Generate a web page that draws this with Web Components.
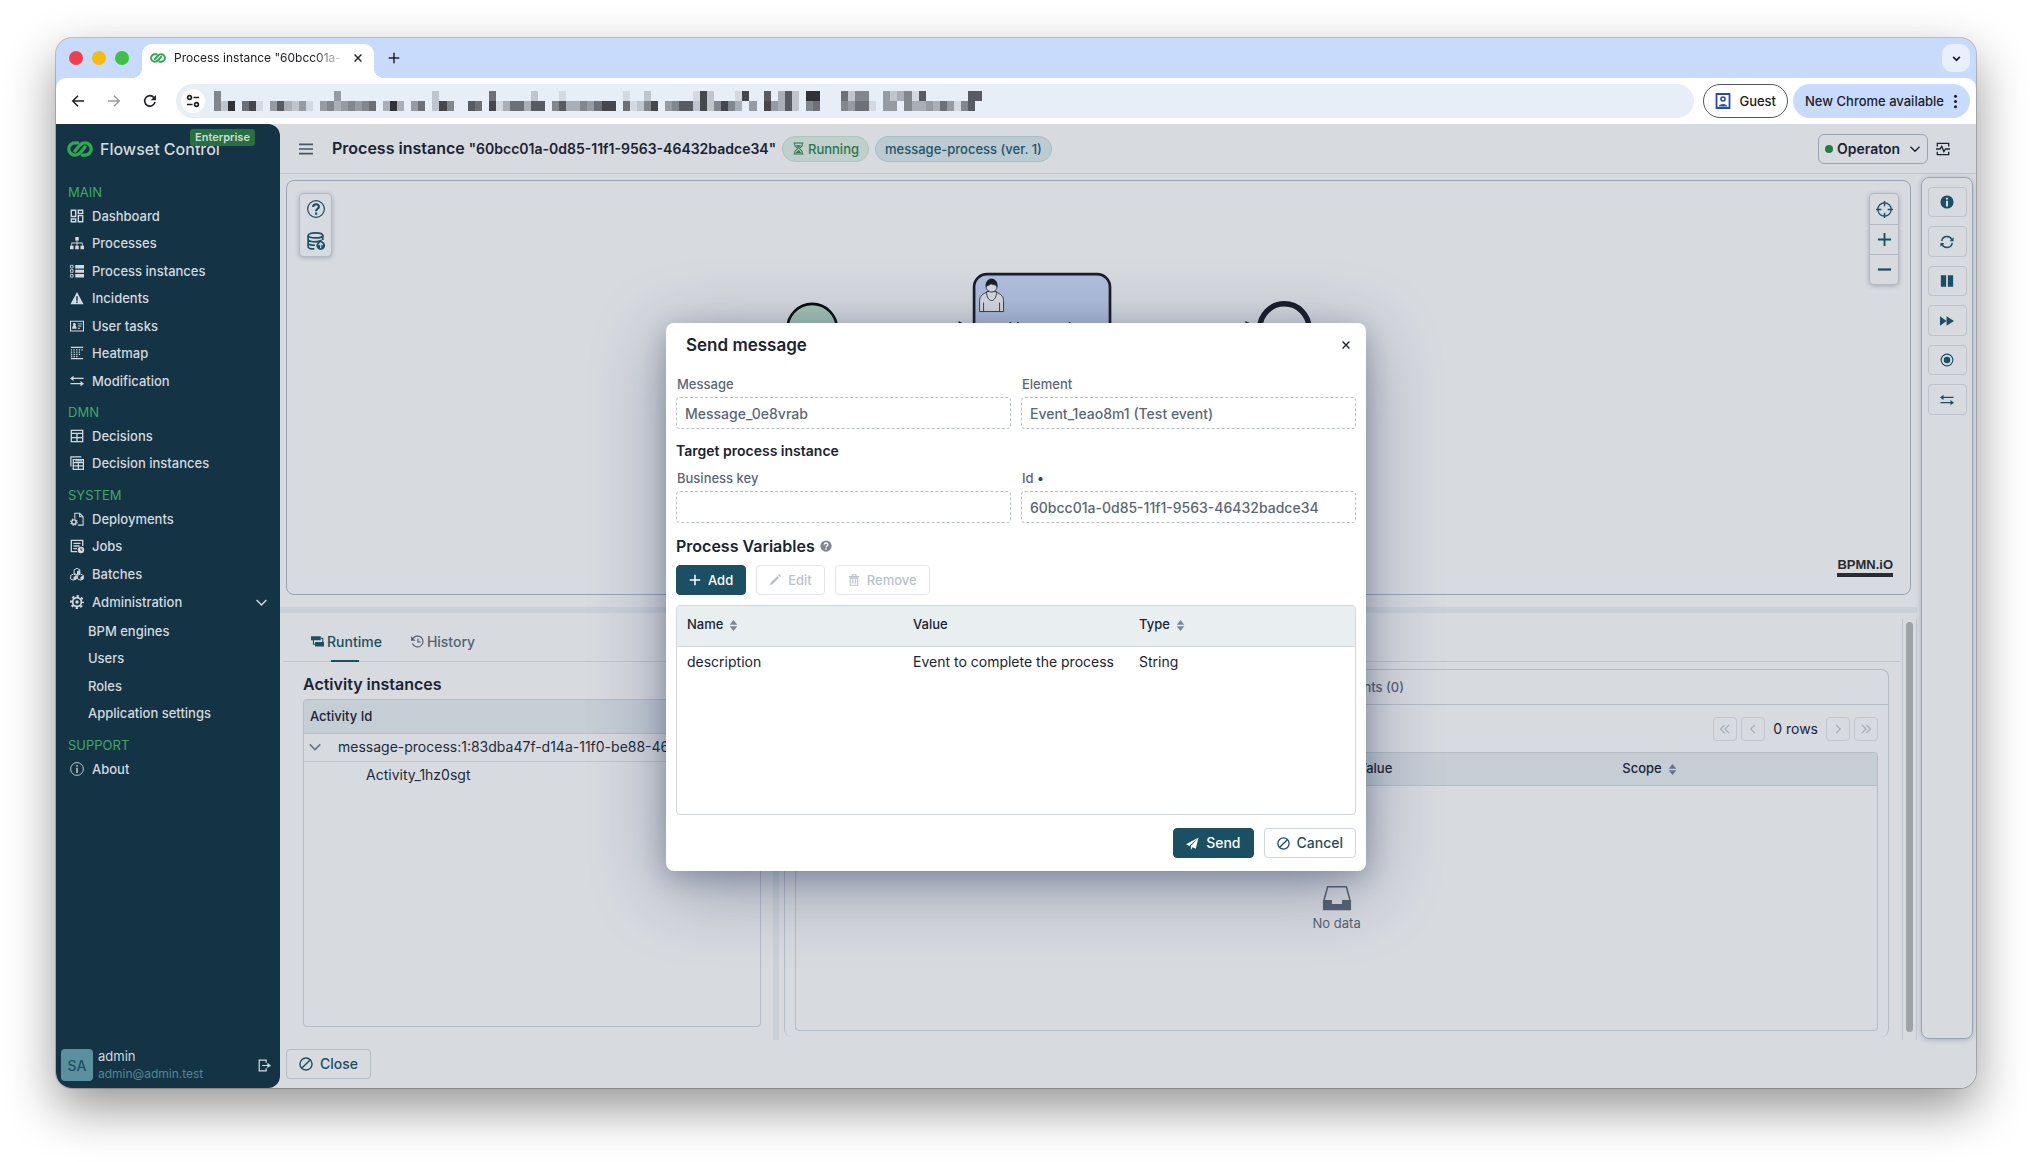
<!DOCTYPE html>
<html lang="en">
<head>
<meta charset="utf-8">
<title>Flowset Control</title>
<style>
	html, body {
		margin: 0;
		height: 100%;
	}
	body {
		box-sizing: border-box;
		padding: 38px 56px 74px;
		background: #fff;
		font: 14px/20px Inter, "Liberation Sans", sans-serif;
		color: #1f2b3d;
		overflow: hidden;
		--surface: #d7dadf;
		--line: #b4bcc6;
		--head: #c5cdd5;
		--primary: #1b4f63;
		--ink: #1a2434;
		--muted: #566273;
	}
</style>
</head>
<body>
<browser-window>
	<flowset-app></flowset-app>
</browser-window>
<script>
const ICONS = {
	logo: `<g fill="none" stroke="#2fa84f" stroke-width="2" stroke-linecap="round"><path d="M6.600 4.300H4.800a3.700 3.700 0 0 0 0 7.400c1.700 0 2.700-.6 3.600-1.700l2.700-3.200"/><path d="M9.400 11.700h1.800a3.700 3.700 0 0 0 0-7.400c-1.700 0-2.700.6-3.600 1.700L4.900 9.200"/></g>`,
	dashboard: `<g fill="none" stroke="currentColor" stroke-width="1.6"><path d="M1.500 1.500h5v7h-5zM9.500 1.500h5v3.500h-5zM9.500 7.500h5v7h-5zM1.500 11.500h5v3h-5z"/></g>`,
	sitemap: `<path fill="currentColor" d="M6 1h4v4H6zM0 11h4v4H0zM6 11h4v4H6zM12 11h4v4h-4zM7.500 5h1v6h-1zM1.500 7.500h13V11h-1V8.500h-11V11h-1z"/>`,
	list: `<path fill="currentColor" d="M6 1h10v4H6zM6 6.500h10v3.500H6zM6 11.500h10v4H6z"/><path fill="none" stroke="currentColor" d="M.5 1.500h3v3h-3zM.5 6.500h3v3h-3zM.5 12h3v3h-3z"/>`,
	warning: `<path fill="currentColor" fill-rule="evenodd" d="M8 1 .5 15h15zM7.200 6h1.600v5H7.200zM7.200 12h1.600v1.600H7.200z"/>`,
	card: `<path fill="none" stroke="currentColor" stroke-width="1.200" d="M.6 2.600h14.800v11H.6z"/><path fill="currentColor" d="M5 4.500a1.700 1.700 0 0 1 1 3.100c1 .4 1.500 1.400 1.500 3.400h-5c0-2 .5-3 1.500-3.400a1.700 1.700 0 0 1 1-3.100zM9 5h5v1H9zM9 7.500h4v1H9zM9 10h2.500v1H9z"/>`,
	heatmap: `<path stroke="currentColor" stroke-width="1.400" d="M1 1.500h14M1 14.500h14"/><path stroke="currentColor" stroke-width="1.500" stroke-dasharray="1.500 1.500" d="M1 4.500h14M1 7h12M1 9.500h12M1 12h9"/>`,
	modify: `<g fill="none" stroke="currentColor" stroke-width="1.500"><path d="M3 5h12.500M.5 11H13"/></g><path fill="currentColor" d="M4 2v6L0 5zM12 8v6l4-3z"/>`,
	table: `<path fill="none" stroke="currentColor" stroke-width="1.500" d="M1.500 1.500h13v13h-13zM1.500 5h13M1.500 9.800h13M8 5v9.500"/>`,
	tables: `<path fill="none" stroke="currentColor" stroke-width="1.400" d="M1 12V1h12M3.700 4h11.600v11.300H3.700zM3.700 7.500h11.600M3.700 11.300h11.600M9.500 7.500v8M6 5.500h8"/>`,
	deploy: `<path fill="none" stroke="currentColor" stroke-width="1.200" d="M5.500 7V1.500h5.500L15 5.500v9.500H9M11 1.500v4h4"/><circle cx="4.500" cy="11.500" r="2.500" fill="none" stroke="currentColor" stroke-width="1.600"/><circle cx="4.500" cy="11.500" r="3.700" fill="none" stroke="currentColor" stroke-width="1.200" stroke-dasharray="1.500 1.400"/>`,
	jobs: `<path fill="none" stroke="currentColor" stroke-width="1.500" d="M14.500 8V1.500h-13v13H8M4 5h8M4 8h7M4 11h4"/><circle cx="12.500" cy="12.500" r="3.700" fill="currentColor"/><path fill="none" stroke="#143445" d="M12.500 10.500v2.200h1.800"/>`,
	cubes: `<g fill="none" stroke="currentColor" stroke-width="1.100"><path d="M8 1.500 11.300 3.200v4L8 9 4.700 7.200v-4zM4 8l3.300 1.700v4L4 15 .7 13.700v-4zM12 8l3.300 1.700v4L12 15l-3.300-1.300v-4z"/></g><path fill="currentColor" d="m8 5 3.300-1.800v4L8 9zM4 11.500l3.300-1.800v4L4 15zM12 11.500l3.300-1.800v4L12 15z"/>`,
	cog: `<circle cx="8" cy="8" r="5" fill="none" stroke="currentColor" stroke-width="2"/><circle cx="8" cy="8" r="2" fill="currentColor"/><circle cx="8" cy="8" r="6.900" fill="none" stroke="currentColor" stroke-width="2.200" stroke-dasharray="2.600 2.820" stroke-dashoffset="1.300"/>`,
	infoLine: `<circle cx="8" cy="8" r="7.300" fill="none" stroke="currentColor"/><path stroke="currentColor" stroke-width="1.600" d="M8 3.500v1.700M8 6.500v6"/>`,
	info: `<path fill="currentColor" fill-rule="evenodd" d="M8 .5a7.500 7.500 0 1 0 0 15 7.500 7.500 0 0 0 0-15zM6.800 3h2.400v2.200H6.800zM6.800 6.500h2.400V13H6.800z"/>`,
	refresh: `<g fill="none" stroke="currentColor" stroke-width="1.700"><path d="M2 7a6 6 0 0 1 11.500-1.500M14 9a6 6 0 0 1-11.500 1.500"/></g><path fill="currentColor" d="M15.500 2.500v4.500H11zM.5 13.500V9H5z"/>`,
	pause: `<path fill="currentColor" d="M1 1.500h6v13H1zM9 1.500h6v13H9z"/>`,
	forward: `<path fill="currentColor" d="M0 2.500 7.500 8v-5.500L16 8l-8.500 5.500V8L0 13.500z"/>`,
	record: `<circle cx="8" cy="8" r="6.700" fill="none" stroke="currentColor" stroke-width="1.300"/><circle cx="8" cy="8" r="3.700" fill="currentColor"/>`,
	menu: `<path stroke="currentColor" stroke-width="1.700" d="M1 3.300h14M1 8h14M1 12.700h14"/>`,
	hourglass: `<path fill="none" stroke="currentColor" stroke-width="1.300" d="M2 1.200h12M2 14.800h12M3.500 1v3.500L7 8l-3.500 3.500V15M12.500 1v3.500L9 8l3.500 3.500V15"/><path fill="currentColor" d="M5 4h6L8 7.500zM8 9.500l3.500 4h-7z"/>`,
	chevron: `<path fill="none" stroke="currentColor" stroke-width="1.800" d="m2 5 6 6 6-6"/>`,
	chevronBold: `<path fill="none" stroke="currentColor" stroke-width="3" d="m2 5 6 6 6-6"/>`,
	left: `<path fill="none" stroke="currentColor" stroke-width="1.500" d="M10.500 2.500 5 8l5.500 5.500"/>`,
	right: `<path fill="none" stroke="currentColor" stroke-width="1.500" d="M5.500 2.500 11 8l-5.500 5.500"/>`,
	first: `<path fill="none" stroke="currentColor" stroke-width="1.500" d="M7.500 2.500 2 8l5.500 5.500M13.500 2.500 8 8l5.500 5.500"/>`,
	last: `<path fill="none" stroke="currentColor" stroke-width="1.500" d="M8.500 2.500 14 8l-5.500 5.500M2.500 2.500 8 8l-5.500 5.500"/>`,
	pulse: `<path fill="none" stroke="currentColor" stroke-width="1.500" d="M1.500 5V1.500h13V5M1.500 11v3.500h13V11M0 8h4.500l2-3 2.500 6 2-3h5"/>`,
	question: `<circle cx="8" cy="8" r="7.400" fill="none" stroke="currentColor" stroke-width="1.100"/><path fill="none" stroke="currentColor" stroke-width="1.900" d="M5.400 6.300C5.500 3 10.600 3.100 10.600 6c0 1.800-2.500 1.800-2.500 4M8.100 11.200v1.900"/>`,
	help: `<circle cx="8" cy="8" r="7.500" fill="currentColor"/><path fill="none" stroke="#fff" stroke-width="1.900" d="M5.600 6.300c.1-3 4.900-2.900 4.900-.2C10.500 7.800 8 7.800 8 9.800M8 11v1.900"/>`,
	database: `<g fill="none" stroke="currentColor" stroke-width="1.500"><ellipse cx="7.500" cy="3" rx="6.500" ry="2.300"/><path d="M1 3v10c0 1.200 2.500 2 5.500 2M14 3v4M1 6.300c0 3 9 3 12 1M1 9.800c0 1.300 3 2 6 2"/></g><circle cx="12.200" cy="12" r="3.900" fill="currentColor"/><path fill="none" stroke="#d7dadf" stroke-width="1.100" d="M12.200 14.500V10M10.300 11.600l1.900-1.900 1.900 1.900"/>`,
	target: `<circle cx="8" cy="8" r="6.300" fill="none" stroke="currentColor" stroke-width="1.200"/><path stroke="currentColor" stroke-width="1.400" d="M8 0v5M8 11v5M0 8h5M11 8h5"/>`,
	plus: `<path stroke="currentColor" stroke-width="2" d="M8 1v14M1 8h14"/>`,
	minus: `<path stroke="currentColor" stroke-width="2.400" d="M1 8h14"/>`,
	pencil: `<path fill="currentColor" d="M11 2.500 13.500 5l-8.700 8.700L1 15l1.300-3.800zM12 1.500l1-1c1-.9 3.400 1.500 2.500 2.500l-1 1z"/>`,
	trash: `<path fill="none" stroke="currentColor" stroke-width="1.400" d="M1.500 3.500h13M5.500 3V1h5v2M3 5.500h10V15H3zM6.300 6.500V13M9.700 6.500V13"/>`,
	send: `<path fill="currentColor" d="M15.500.5 0 9l4 2zM15.500.5 6 11v5l2.200-3.300L12 14.500z"/>`,
	ban: `<circle cx="8" cy="8" r="6.900" fill="none" stroke="currentColor" stroke-width="1.600"/><path stroke="currentColor" stroke-width="1.600" d="m3.300 12.700 9.400-9.400"/>`,
	cross: `<path stroke="currentColor" stroke-width="2.200" d="m2.500 2.500 11 11M13.500 2.500l-11 11"/>`,
	sort: `<path fill="currentColor" d="m8 0 5.500 6.800h-11zM8 16l5.500-6.800h-11z"/>`,
	runtime: `<path fill="currentColor" d="M0 1.500h12V6.500H0zM5 8.500h11v5.500H5z"/><path fill="none" stroke="currentColor" stroke-width="1.300" d="M3 6v5.500h3M12 4h2.500v5"/>`,
	history: `<path fill="none" stroke="currentColor" stroke-width="1.500" d="M2 5a6.700 6.700 0 1 1-.2 5.500M8.500 4.500v4h3.300"/><path fill="currentColor" d="M0 1.500v5.500h5.500z"/>`,
	inbox: `<path fill="none" stroke="currentColor" stroke-width=".8" d="M1 9.500 3 2h10l2 7.500"/><path fill="currentColor" d="M.5 9h4.800v2.200h5.400V9h4.800v5.500H.5z"/>`,
	logout: `<path fill="none" stroke="currentColor" stroke-width="1.500" d="M10 4.500V1.500H1.500v13H10v-3M5 8h9"/><path fill="currentColor" d="M11.500 4.500 16 8l-4.500 3.500z"/>`,
	back: `<path fill="none" stroke="currentColor" stroke-width="1.700" d="M15 8H2M8 2 2 8l6 6"/>`,
	next: `<path fill="none" stroke="currentColor" stroke-width="1.700" d="M1 8h13M8 2l6 6-6 6"/>`,
	reload: `<path fill="none" stroke="currentColor" stroke-width="1.800" d="M13.800 9A6 6 0 1 1 12.500 4"/><path fill="currentColor" d="M14.800 1v6H8.800z"/>`,
	tune: `<g fill="none" stroke="currentColor" stroke-width="1.900"><circle cx="4" cy="4" r="2.200"/><circle cx="12" cy="12" r="2.200"/><path d="M8.500 4H15M1 12h6.500"/></g>`,
	guest: `<path fill="none" stroke="currentColor" stroke-width="1.800" d="M1.500 1h13v14h-13z"/><circle cx="8" cy="6" r="2" fill="none" stroke="currentColor" stroke-width="1.600"/><path fill="currentColor" d="M3.500 13.500c1-3.500 8-3.500 9 0z"/>`,
	dots: `<g fill="currentColor"><circle cx="8" cy="2.500" r="1.600"/><circle cx="8" cy="8" r="1.600"/><circle cx="8" cy="13.500" r="1.600"/></g>`
};

const BASE = `
	*, *::before, *::after { box-sizing: border-box; }
	button, input, select { font: inherit; color: inherit; margin: 0; }
	button { background: none; border: 0; padding: 0; }
	h1, h2, h3, ul, p { margin: 0; padding: 0; }
	ul { list-style: none; }
	a { color: inherit; text-decoration: none; }
`;

/** Renders css + html into an open shadow root */
class BaseElement extends HTMLElement {
	constructor(){
		super();
		this.attachShadow({mode:"open"});
	}
	connectedCallback(){
		this.shadowRoot.innerHTML = `<style>${BASE}${this.css()}</style>${this.html()}`;
	}
	css(){ return ""; }
	html(){ return "<slot></slot>"; }
}

customElements.define("ui-icon",class extends BaseElement {
	css(){
		return /*css*/`
			:host { display: inline-flex; flex: none; width: var(--icon-size, 14px); height: var(--icon-size, 14px); }
			svg { width: 100%; height: 100%; overflow: visible; }
		`;
	}
	html(){
		return `<svg viewBox="0 0 16 16" aria-hidden="true">${ICONS[this.getAttribute("name")]}</svg>`;
	}
});

customElements.define("ui-button",class extends BaseElement {
	css(){
		return /*css*/`
			:host { display: inline-flex; }
			button {
				display: flex;
				align-items: center;
				gap: 7px;
				height: 30px;
				padding: 0 12px;
				border: 1px solid #cfd5dc;
				border-radius: 4px;
				color: var(--primary);
				font-weight: 500;
				white-space: nowrap;
			}
			:host([theme="primary"]) button { background: var(--primary); border-color: var(--primary); color: #fff; }
			:host([theme="dim"]) button { border-color: var(--line); }
			button:disabled { color: #bcc2cb; border-color: #e1e5e9; }
		`;
	}
	html(){
		return `<button type="button" ${this.hasAttribute("disabled") ? "disabled" : ""}><ui-icon name="${this.getAttribute("icon")}"></ui-icon><slot></slot></button>`;
	}
});

customElements.define("ui-field",class extends BaseElement {
	css(){
		return /*css*/`
			:host { display: block; min-width: 0; }
			label { display: block; font-size: 13px; font-weight: 500; line-height: 20px; color: #5b6778; padding-left: 1px; }
			label i { color: var(--primary); font-style: normal; }
			input {
				display: block;
				width: 100%;
				height: 32px;
				margin-top: 3px;
				padding: 0 8px;
				border: 1px dashed #b9c0c9;
				border-radius: 4px;
				background: transparent;
				color: #5b6778;
				font-weight: 500;
				outline: none;
			}
		`;
	}
	html(){
		const mark = this.hasAttribute("required") ? " <i>•</i>" : "";
		return `<label for="input">${this.getAttribute("label")}${mark}</label><input id="input" readonly value="${this.getAttribute("value") || ""}">`;
	}
});

customElements.define("ui-badge",class extends BaseElement {
	css(){
		return /*css*/`
			:host {
				display: inline-flex;
				align-items: center;
				gap: 3px;
				height: 26px;
				padding: 0 9px;
				border: 1px solid #a9bcc6;
				border-radius: 13px;
				background: #bccad2;
				color: #1b5468;
				font-size: 13px;
				font-weight: 500;
				white-space: nowrap;
				--icon-size: 13px;
			}
			:host([theme="success"]) { background: #c0cfcc; border-color: #adc6bb; color: #28784a; }
		`;
	}
});

/* browser frame */

// darkness of each tile of the blurred address, 0 is empty
const TILES = [
	"5000000000000000040000000000000200000006000002000100000000100200000018200018007037209900062550042351700000077",
	"5290681047324104534545603930460285007608136637705733546880612580457728258530408437205600054661044053343641570"
];

customElements.define("address-tiles",class extends BaseElement {
	css(){
		return /*css*/`
			:host { display: block; flex: none; height: 20px; }
			svg { display: block; }
		`;
	}
	html(){
		const rects = TILES.map((row,y)=>[...row].map((n,x)=>
			n==="0" ? "" : `<rect x="${x*7}" y="${y*10}" width="7" height="10" fill="#1c1d22" opacity="${n/10}"/>`
		).join("")).join("");
		return `<svg width="768" height="20" viewBox="0 0 ${TILES[0].length*7} 20" preserveAspectRatio="none" shape-rendering="crispEdges">${rects}</svg>`;
	}
});

customElements.define("browser-window",class extends BaseElement {
	css(){
		return /*css*/`
			:host {
				display: flex;
				flex-direction: column;
				height: 100%;
				border-radius: 16px;
				background: #c9dbfd;
				box-shadow: 0 0 0 1px rgba(0,0,0,.2), 0 20px 50px rgba(0,0,0,.42);
				overflow: hidden;
				color: #202124;
			}
			.tabs { display: flex; height: 40px; align-items: center; padding: 0 6px 0 13px; --icon-size: 12px; }
			.lights { display: flex; gap: 9px; width: 73px; }
			.lights i { width: 14px; height: 14px; border-radius: 50%; }
			.tab {
				position: relative;
				display: flex;
				align-items: center;
				align-self: flex-end;
				gap: 8px;
				width: 232px;
				height: 34px;
				padding: 0 11px 6px 8px;
				border-radius: 10px 10px 0 0;
				background: #fff;
				font-size: 12px;
				--icon-size: 10px;
			}
			.tab::before, .tab::after {
				content: "";
				position: absolute;
				bottom: 0;
				width: 10px;
				height: 10px;
				background: radial-gradient(circle at 0 0, transparent 10px, #fff 10px);
			}
			.tab::before { left: -10px; }
			.tab::after { right: -10px; transform: scaleX(-1); }
			.tab ui-icon:first-child { --icon-size: 16px; }
			.tab span {
				flex: 1;
				white-space: nowrap;
				-webkit-mask-image: linear-gradient(90deg, #000 82%, transparent);
				mask-image: linear-gradient(90deg, #000 82%, transparent);
			}
			.add { display: flex; margin-left: 14px; }
			.more { margin-left: auto; width: 28px; height: 28px; border-radius: 10px; background: #e8f0fe; --icon-size: 9px; }
			.bar {
				display: flex;
				align-items: center;
				height: 46px;
				padding: 0 6px 0 15px;
				border-radius: 10px 10px 0 0;
				background: #fff;
				--icon-size: 14px;
			}
			.nav { display: flex; }
			.nav button { display: flex; margin-right: 22px; }
			.nav button:nth-child(2) { color: #9a9da1; }
			.nav button:last-child { margin-right: 19px; }
			.address {
				flex: 1;
				display: flex;
				align-items: center;
				gap: 9px;
				min-width: 0;
				height: 34px;
				margin-right: 9px;
				padding: 0 5px;
				border-radius: 17px;
				background: #e8eef8;
			}
			.site { display: grid; place-items: center; width: 24px; height: 24px; border-radius: 50%; background: #fff; }
			.address input { flex: 1; min-width: 0; border: 0; background: none; outline: none; }
			.pill {
				display: flex;
				align-items: center;
				gap: 8px;
				height: 34px;
				padding: 0 11px;
				border-radius: 17px;
				font-size: 13px;
				font-weight: 500;
				white-space: nowrap;
			}
			.guest { border: 1px solid #55585c; --icon-size: 16px; }
			.guest ui-icon { color: #2347c9; }
			.update { margin-left: 5px; gap: 4px; padding: 0 7px 0 12px; background: #c9dbfd; --icon-size: 15px; }
			slot { display: flex; flex: 1; min-height: 0; }
		`;
	}
	html(){
		return /*html*/`
			<div class="tabs">
				<div class="lights"><i style="background:#f33f4d"></i><i style="background:#f7bb0b"></i><i style="background:#3bc144"></i></div>
				<div class="tab"><ui-icon name="logo"></ui-icon><span>Process instance "60bcc01a-</span><ui-icon name="cross"></ui-icon></div>
				<button class="add" aria-label="New tab"><ui-icon name="plus"></ui-icon></button>
				<button class="more" aria-label="Search tabs"><ui-icon name="chevronBold"></ui-icon></button>
			</div>
			<div class="bar">
				<div class="nav">
					<button aria-label="Back"><ui-icon name="back"></ui-icon></button>
					<button aria-label="Forward"><ui-icon name="next"></ui-icon></button>
					<button aria-label="Reload"><ui-icon name="reload"></ui-icon></button>
				</div>
				<div class="address">
					<span class="site"><ui-icon name="tune"></ui-icon></span>
					<address-tiles></address-tiles>
					<input aria-label="Address">
				</div>
				<button class="pill guest"><ui-icon name="guest"></ui-icon>Guest</button>
				<button class="pill update">New Chrome available<ui-icon name="dots"></ui-icon></button>
			</div>
			<slot></slot>
		`;
	}
});

/* sidebar */

customElements.define("nav-link",class extends BaseElement {
	css(){
		return /*css*/`
			:host { display: block; height: 27px; }
			:host(:nth-of-type(even)) { height: 28px; }
			:host([open]) { height: 30px; }
			a { display: flex; align-items: center; gap: 8px; height: 100%; padding: 0 12px 0 14px; font-size: 13px; font-weight: 500; white-space: nowrap; }
			:host([sub]) a { padding-left: 32px; }
			.open { margin-left: auto; --icon-size: 13px; }
		`;
	}
	html(){
		const icon = this.getAttribute("icon");
		return `<a href="#">${icon ? `<ui-icon name="${icon}"></ui-icon>` : ""}<slot></slot>${this.hasAttribute("open") ? `<ui-icon class="open" name="chevron"></ui-icon>` : ""}</a>`;
	}
});

customElements.define("nav-group",class extends BaseElement {
	css(){
		return /*css*/`
			:host { display: block; margin-bottom: 8px; }
			h3 { padding: 0 12px; font-size: 13px; font-weight: 400; line-height: 20px; color: #3fa865; }
		`;
	}
	html(){
		return `<h3>${this.getAttribute("label")}</h3><slot></slot>`;
	}
});

customElements.define("app-sidebar",class extends BaseElement {
	css(){
		return /*css*/`
			:host {
				display: flex;
				flex-direction: column;
				flex: none;
				width: 224px;
				border-radius: 0 12px 12px 0;
				background: #143445;
				color: #d3d9df;
			}
			.brand { position: relative; display: flex; align-items: center; gap: 7px; height: 50px; padding-left: 11px; font-size: 16px; font-weight: 500; --icon-size: 26px; }
			.brand span {
				position: absolute;
				left: 134px;
				top: 5px;
				padding: 0 5px;
				border-radius: 3px;
				background: #28703f;
				font-size: 11px;
				line-height: 17px;
				font-weight: 600;
			}
			nav { flex: 1; padding-top: 8px; }
			.user { display: flex; align-items: center; gap: 5px; padding: 0 9px 6px 5px; font-size: 13px; line-height: 17px; }
			.avatar { display: grid; place-items: center; width: 32px; height: 32px; border-radius: 4px; background: #5b90a0; color: #1b4f63; font-size: 14px; font-weight: 500; }
			.mail { font-size: 12px; color: #4f8898; }
			.user button { margin-left: auto; display: flex; --icon-size: 13px; }
		`;
	}
	html(){
		return /*html*/`
			<div class="brand"><ui-icon name="logo"></ui-icon>Flowset Control<span>Enterprise</span></div>
			<nav>
				<nav-group label="MAIN">
					<nav-link icon="dashboard">Dashboard</nav-link>
					<nav-link icon="sitemap">Processes</nav-link>
					<nav-link icon="list">Process instances</nav-link>
					<nav-link icon="warning">Incidents</nav-link>
					<nav-link icon="card">User tasks</nav-link>
					<nav-link icon="heatmap">Heatmap</nav-link>
					<nav-link icon="modify">Modification</nav-link>
				</nav-group>
				<nav-group label="DMN">
					<nav-link icon="table">Decisions</nav-link>
					<nav-link icon="tables">Decision instances</nav-link>
				</nav-group>
				<nav-group label="SYSTEM">
					<nav-link icon="deploy">Deployments</nav-link>
					<nav-link icon="jobs">Jobs</nav-link>
					<nav-link icon="cubes">Batches</nav-link>
					<nav-link icon="cog" open>Administration</nav-link>
					<nav-link sub>BPM engines</nav-link>
					<nav-link sub>Users</nav-link>
					<nav-link sub>Roles</nav-link>
					<nav-link sub>Application settings</nav-link>
				</nav-group>
				<nav-group label="SUPPORT">
					<nav-link icon="infoLine">About</nav-link>
				</nav-group>
			</nav>
			<div class="user">
				<div class="avatar">SA</div>
				<div><div>admin</div><div class="mail">admin@admin.test</div></div>
				<button aria-label="Log out"><ui-icon name="logout"></ui-icon></button>
			</div>
		`;
	}
});

/* main area */

customElements.define("app-header",class extends BaseElement {
	css(){
		return /*css*/`
			:host { display: flex; align-items: center; flex: none; height: 50px; padding: 0 26px 0 18px; border-bottom: 1px solid #bfc5cd; color: var(--ink); }
			.menu { display: flex; margin-right: 18px; color: #4a5667; --icon-size: 16px; }
			h1 { font-size: 16px; font-weight: 600; margin-right: 6px; white-space: nowrap; }
			h1 span { font-size: 14px; }
			ui-badge { margin-right: 6px; }
			.engine { position: relative; display: flex; align-items: center; margin-left: auto; width: 110px; height: 30px; border: 1px solid #98a5b5; border-radius: 6px; font-weight: 600; }
			.engine i { position: absolute; left: 6px; width: 8px; height: 8px; border-radius: 50%; background: #267a43; }
			.engine ui-icon { position: absolute; right: 6px; --icon-size: 12px; pointer-events: none; }
			select { appearance: none; width: 100%; height: 100%; padding: 0 20px 0 18px; border: 0; background: none; }
			.pulse { display: flex; margin-left: 8px; }
		`;
	}
	html(){
		return /*html*/`
			<button class="menu" aria-label="Toggle menu"><ui-icon name="menu"></ui-icon></button>
			<h1>Process instance <span>"60bcc01a-0d85-11f1-9563-46432badce34"</span></h1>
			<ui-badge theme="success"><ui-icon name="hourglass"></ui-icon>Running</ui-badge>
			<ui-badge>message-process (ver. 1)</ui-badge>
			<div class="engine"><i></i><select aria-label="Engine"><option>Operaton</option></select><ui-icon name="chevron"></ui-icon></div>
			<button class="pulse" aria-label="Health"><ui-icon name="pulse"></ui-icon></button>
		`;
	}
});

customElements.define("bpmn-viewer",class extends BaseElement {
	css(){
		return /*css*/`
			:host { position: relative; display: flex; flex: 1; min-height: 0; border: 1px solid #98a5b5; border-radius: 8px; overflow: hidden; color: var(--primary); }
			.canvas { flex: 1; width: 100%; height: 100%; }
			.tools { position: absolute; top: 12px; display: flex; flex-direction: column; border: 1px solid #b3bac4; border-radius: 5px; background: var(--surface); box-shadow: 0 1px 4px rgba(40,60,90,.3); }
			.tools button { display: grid; place-items: center; }
			.left { left: 12px; gap: 2px; --icon-size: 18px; }
			.left button { width: 31px; height: 30px; }
			.right { right: 11px; }
			.right button { width: 28px; height: 30px; --icon-size: 15px; }
			.right button:first-child { --icon-size: 17px; }
			.right button + button { border-top: 1px solid #b3bac4; }
			.logo { position: absolute; right: 17px; bottom: 17px; border-bottom: 4px solid #2a2c31; font: bold 13px/17px "Liberation Sans", sans-serif; color: #2a2c31; }
		`;
	}
	html(){
		return /*html*/`
			<svg class="canvas" viewBox="0 0 1624 412" preserveAspectRatio="xMidYMid meet">
				<g stroke="#1a1e29">
					<g stroke-width="2"><path d="M550 147h134M824 147h147"/><path fill="#1a1e29" d="m673 141 12 6-12 6zM960 141l12 6-12 6z"/></g>
					<circle cx="525.500" cy="147" r="24.700" fill="#a5c6b5" stroke="#0b0d10" stroke-width="2.700"/>
					<rect x="687.500" y="92.500" width="136" height="109" rx="13" fill="#afbedc" stroke-width="2.700"/>
					<circle cx="998" cy="147" r="24.700" fill="none" stroke-width="5.500"/>
					<g stroke-width=".8" fill="#d7dadf">
						<path d="M693 130v-11c0-4 3-7 8-8.500h8c5 1.500 8 4.500 8 8.500v11z"/>
						<path d="M697 130v-9M713 130v-9" fill="none"/>
						<path d="M700 110c0 12 10 12 10 0z"/>
						<circle cx="705" cy="105" r="5.500"/>
						<path fill="#1a1e29" d="M699.500 105c-1-10 12-10 11 0-2-3-5-1-6-3-1 2-3 1-5 3z"/>
					</g>
				</g>
				<text x="755.500" y="152" text-anchor="middle" font-family="Liberation Sans, sans-serif" font-size="16" fill="#1a1e29">User task</text>
			</svg>
			<div class="tools left">
				<button aria-label="Help"><ui-icon name="question"></ui-icon></button>
				<button aria-label="Upload"><ui-icon name="database"></ui-icon></button>
			</div>
			<div class="tools right">
				<button aria-label="Fit"><ui-icon name="target"></ui-icon></button>
				<button aria-label="Zoom in"><ui-icon name="plus"></ui-icon></button>
				<button aria-label="Zoom out"><ui-icon name="minus"></ui-icon></button>
			</div>
			<a class="logo" href="#">BPMN.iO</a>
		`;
	}
});

customElements.define("activity-tree",class extends BaseElement {
	css(){
		return /*css*/`
			:host { display: flex; flex-direction: column; min-width: 0; padding: 12px 12px 13px 20px; }
			h2 { font-size: 16px; font-weight: 600; color: var(--ink); margin-bottom: 5px; }
			.box { flex: 1; border: 1px solid var(--line); border-radius: 4px; overflow: hidden; }
			table { width: 100%; border-collapse: collapse; }
			th { height: 33px; padding: 0 6px; background: var(--head); border-bottom: 1px solid var(--line); font-size: 13px; font-weight: 500; text-align: left; color: var(--ink); }
			td { height: 28px; padding: 0 4px; white-space: nowrap; }
			tr:nth-child(1) td { border-bottom: 1px solid #bfc5cd; }
			td div { display: flex; align-items: center; gap: 16px; }
			td ui-icon { color: #66758a; }
			.child { padding-left: 58px; }
		`;
	}
	html(){
		return /*html*/`
			<h2>Activity instances</h2>
			<div class="box">
				<table>
					<thead><tr><th>Activity Id</th></tr></thead>
					<tbody>
						<tr><td><div><ui-icon name="chevron"></ui-icon>message-process:1:83dba47f-d14a-11f0-be88-46</div></td></tr>
						<tr><td><div class="child">Activity_1hz0sgt</div></td></tr>
					</tbody>
				</table>
			</div>
		`;
	}
});

customElements.define("variables-panel",class extends BaseElement {
	css(){
		return /*css*/`
			:host { display: flex; flex-direction: column; min-width: 0; margin: 7px 11px 3px 5px; border: 1px solid var(--line); border-bottom: 0; border-radius: 8px; color: var(--ink); }
			.tabs { height: 35px; padding-left: 49%; border-bottom: 1px solid var(--line); color: var(--muted); font-size: 13px; font-weight: 500; }
			.tabs button { height: 100%; }
			.pager { display: flex; align-items: center; justify-content: flex-end; gap: 4px; padding: 12px 10px 11px; }
			.pager button { display: grid; place-items: center; width: 24px; height: 24px; border: 1px solid #c0c6ce; border-radius: 4px; color: #a3acb8; --icon-size: 12px; }
			.pager span { padding: 0 4px; }
			.box { flex: 1; display: flex; flex-direction: column; margin: 0 10px 6px; border: 1px solid var(--line); border-radius: 4px; overflow: hidden; }
			table { width: 100%; table-layout: fixed; border-collapse: collapse; }
			th { height: 32px; padding: 0 10px 2px; background: var(--head); border-bottom: 1px solid var(--line); font-size: 13px; font-weight: 500; text-align: left; }
			th:first-child { width: 22px; padding: 0; }
			th ui-icon { --icon-size: 11px; margin-left: 5px; vertical-align: -2px; color: #66758a; }
			.empty { flex: 1; display: flex; flex-direction: column; align-items: center; justify-content: center; font-size: 13px; color: var(--muted); --icon-size: 30px; }
		`;
	}
	html(){
		return /*html*/`
			<div class="tabs"><button role="tab">Incidents (0)</button></div>
			<div class="pager">
				<button disabled aria-label="First"><ui-icon name="first"></ui-icon></button>
				<button disabled aria-label="Previous"><ui-icon name="left"></ui-icon></button>
				<span>0 rows</span>
				<button disabled aria-label="Next"><ui-icon name="right"></ui-icon></button>
				<button disabled aria-label="Last"><ui-icon name="last"></ui-icon></button>
			</div>
			<div class="box">
				<table><thead><tr><th></th><th></th><th></th><th>Value</th><th>Scope<ui-icon name="sort"></ui-icon></th></tr></thead></table>
				<div class="empty"><ui-icon name="inbox"></ui-icon><p>No data</p></div>
			</div>
		`;
	}
});

customElements.define("runtime-panel",class extends BaseElement {
	css(){
		return /*css*/`
			:host { box-sizing: border-box; display: flex; flex: 1 1 50%; min-height: 0; border-top: 6px solid #cad0d7; padding-top: 6px; }
			.content { flex: 1; display: flex; flex-direction: column; min-width: 0; margin: 0 2px 0 3px; }
			.tabs { display: flex; gap: 29px; height: 43px; padding-left: 28px; border-bottom: 1px solid #bfc5cd; color: var(--muted); font-weight: 500; --icon-size: 13px; }
			.tabs button { position: relative; display: flex; align-items: center; gap: 3px; padding-top: 3px; }
			.tabs .active { color: var(--primary); }
			.tabs .active::after { content: ""; position: absolute; left: 20px; bottom: -1px; width: 28px; height: 2px; background: var(--primary); }
			.split { flex: 1; display: grid; grid-template-columns: 35fr 6px 80fr; min-height: 0; }
			.bar { background: #cad0d7; }
			.scroll { width: 15px; border: solid #bfc5cd; border-width: 0 1px; padding: 3px 3px 8px; }
			.scroll i { display: block; height: 100%; border-radius: 4px; background: #9da2a6; }
		`;
	}
	html(){
		return /*html*/`
			<div class="content">
				<div class="tabs" role="tablist">
					<button class="active" role="tab"><ui-icon name="runtime"></ui-icon>Runtime</button>
					<button role="tab"><ui-icon name="history"></ui-icon>History</button>
				</div>
				<div class="split">
					<activity-tree></activity-tree>
					<div class="bar"></div>
					<variables-panel></variables-panel>
				</div>
			</div>
			<div class="scroll"><i></i></div>
		`;
	}
});

customElements.define("action-strip",class extends BaseElement {
	css(){
		return /*css*/`
			:host { display: flex; flex-direction: column; align-items: center; gap: 9px; flex: none; width: 52px; margin: 3px 3px 1px 4px; padding-top: 9px; border: 1px solid #98a5b5; border-radius: 8px; box-shadow: 0 1px 5px rgba(40,60,100,.25); color: var(--primary); }
			button { display: grid; place-items: center; width: 39px; height: 30px; border: 1px solid #bcc3cc; border-radius: 4px; }
			button:nth-of-type(even) { height: 31px; }
		`;
	}
	html(){
		return ["info","refresh","pause","forward","record","modify"].map(name=>
			`<button aria-label="${name}"><ui-icon name="${name}"></ui-icon></button>`
		).join("");
	}
});

customElements.define("message-dialog",class extends BaseElement {
	css(){
		return /*css*/`
			:host { position: absolute; inset: 0; display: grid; place-items: center; padding-bottom: 18px; }
			section { width: 700px; padding: 0 10px 13px; border-radius: 8px; background: #fff; color: var(--ink); box-shadow: 0 6px 24px rgba(30,45,75,.25), 0 16px 72px rgba(30,45,85,.38); }
			header { display: flex; align-items: center; justify-content: space-between; height: 44px; padding: 0 0 0 10px; margin-bottom: 7px; }
			header h2 { font-size: 17px; line-height: 24px; font-weight: 600; }
			header button { display: flex; padding: 5px; --icon-size: 10px; }
			.fields { display: grid; grid-template-columns: 1fr 1fr; gap: 10px; }
			h3 { font-size: 14px; font-weight: 600; margin: 12px 0 7px; }
			.vars { display: flex; align-items: center; gap: 5px; margin: 13px 0 9px; --icon-size: 12px; }
			.vars h2 { font-size: 16px; font-weight: 600; }
			.vars ui-icon { color: #7c8796; }
			.buttons { display: flex; gap: 10px; --icon-size: 12px; font-size: 13px; }
			.grid { height: 210px; margin: 10px 0 13px; border: 1px solid #d2d7de; border-radius: 4px; overflow: hidden; }
			table { width: 100%; table-layout: fixed; border-collapse: collapse; }
			th, td { padding: 0 10px; text-align: left; font-weight: 400; white-space: nowrap; }
			th { height: 40px; padding-bottom: 3px; background: #e9eef1; border-bottom: 1px solid #d2d7de; font-size: 13px; font-weight: 500; }
			td { height: 32px; }
			th ui-icon { --icon-size: 11px; margin-left: 5px; vertical-align: -2px; color: #7c8796; }
			footer.buttons { justify-content: flex-end; font-size: 14px; --icon-size: 13px; }
		`;
	}
	html(){
		return /*html*/`
			<section role="dialog" aria-label="Send message">
				<header><h2>Send message</h2><button aria-label="Close"><ui-icon name="cross"></ui-icon></button></header>
				<div class="fields">
					<ui-field label="Message" value="Message_0e8vrab"></ui-field>
					<ui-field label="Element" value="Event_1eao8m1 (Test event)"></ui-field>
				</div>
				<h3>Target process instance</h3>
				<div class="fields">
					<ui-field label="Business key"></ui-field>
					<ui-field label="Id" required value="60bcc01a-0d85-11f1-9563-46432badce34"></ui-field>
				</div>
				<div class="vars"><h2>Process Variables</h2><ui-icon name="help"></ui-icon></div>
				<div class="buttons">
					<ui-button theme="primary" icon="plus">Add</ui-button>
					<ui-button icon="pencil" disabled>Edit</ui-button>
					<ui-button icon="trash" disabled>Remove</ui-button>
				</div>
				<div class="grid">
					<table>
						<thead><tr><th>Name<ui-icon name="sort"></ui-icon></th><th>Value</th><th>Type<ui-icon name="sort"></ui-icon></th></tr></thead>
						<tbody><tr><td>description</td><td>Event to complete the process</td><td>String</td></tr></tbody>
					</table>
				</div>
				<footer class="buttons">
					<ui-button theme="primary" icon="send">Send</ui-button>
					<ui-button icon="ban">Cancel</ui-button>
				</footer>
			</section>
		`;
	}
});

customElements.define("flowset-app",class extends BaseElement {
	css(){
		return /*css*/`
			:host { position: relative; display: flex; flex: 1; min-width: 0; background: var(--surface); color: #1f2b3d; }
			main { flex: 1; display: flex; flex-direction: column; min-width: 0; }
			.work { flex: 1; display: flex; min-height: 0; }
			.panes { flex: 1; display: flex; flex-direction: column; min-width: 0; }
			.top { flex: 1 1 50%; display: flex; min-height: 0; padding: 6px 6px 12px; }
			footer { display: flex; align-items: flex-start; height: 48px; padding: 9px 6px; }
		`;
	}
	html(){
		return /*html*/`
			<app-sidebar></app-sidebar>
			<main>
				<app-header></app-header>
				<div class="work">
					<div class="panes">
						<div class="top"><bpmn-viewer></bpmn-viewer></div>
						<runtime-panel></runtime-panel>
					</div>
					<action-strip></action-strip>
				</div>
				<footer><ui-button theme="dim" icon="ban">Close</ui-button></footer>
			</main>
			<message-dialog></message-dialog>
		`;
	}
});
</script>
</body>
</html>
